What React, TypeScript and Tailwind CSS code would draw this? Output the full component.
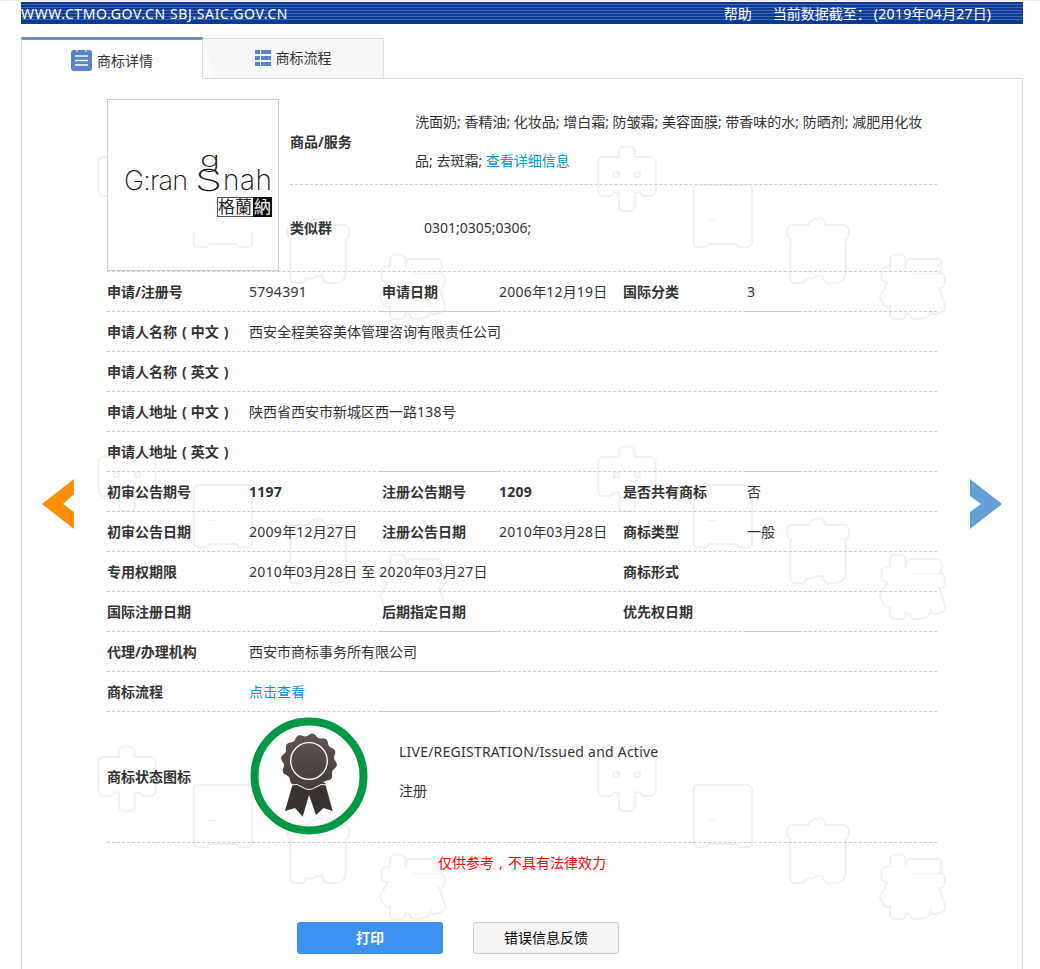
const FONT = "font-['Noto_Sans','Noto_Sans_CJK_SC',sans-serif]";

function T({ children }: { children: string }) {
  const parts = children.split(/([\x00-\x7F]+)/).filter(Boolean);
  return (
    <>
      {parts.map((p, i) =>
        /^[\x00-\x7F]+$/.test(p) ? (
          <span key={i} className="tracking-[0.28px]">{p}</span>
        ) : (
          <span key={i}>{p}</span>
        )
      )}
    </>
  );
}

function Seg({ x, w }: { x: number; w: number }) {
  return <span className="absolute bottom-[-1px] h-px bg-[#cccccc]" style={{ left: x, width: w }} />;
}

function Label({ children, className = "" }: { children?: React.ReactNode; className?: string }) {
  return <div className={"font-bold text-[#333] shrink-0 " + className}>{children}</div>;
}

function Row({ children, segs = "" }: { children: React.ReactNode; segs?: string }) {
  return (
    <div className="relative flex h-10 items-center border-b border-dashed border-[#cccccc] pt-px">
      {children}
      {segs.includes("a") && <Seg x={272} w={122} />}
      {segs.includes("b") && <Seg x={638} w={54} />}
    </div>
  );
}

function TripleRow({ l1, v1 = "", l2, v2 = "", l3, v3 = "", segs, bold }: { l1: string; v1?: string; l2: string; v2?: string; l3: string; v3?: string; segs?: string; bold?: boolean }) {
  return (
    <Row segs={segs}>
      <Label className="w-[142px]">{l1}</Label>
      <div className={"w-[133px] shrink-0 " + (bold ? "font-bold" : "")}><T>{v1}</T></div>
      <Label className="w-[117px]">{l2}</Label>
      <div className={"w-[124px] shrink-0 " + (bold ? "font-bold" : "")}><T>{v2}</T></div>
      <Label className="w-[124px]">{l3}</Label>
      <div><T>{v3}</T></div>
    </Row>
  );
}

function ParenLabel({ a, b }: { a: string; b: string }) {
  return (
    <>
      {a}
      <span className="ml-[5px] mr-[4px]">(</span>
      {b}
      <span className="ml-[5px] mr-[4px]">)</span>
    </>
  );
}

function WideRow({ label, children, segs }: { label: React.ReactNode; children?: React.ReactNode; segs?: string }) {
  return (
    <Row segs={segs}>
      <Label className="w-[142px]">{label}</Label>
      <div>{children}</div>
    </Row>
  );
}

function Watermark() {
  const sets = [
    [0, 0],
    [500, 0],
    [0, 300],
    [500, 300],
    [0, 600],
    [500, 600],
  ];
  const glyphs = [
    ["中", 127, 180],
    ["国", 223, 216],
    ["商", 318, 252],
    ["标", 413, 288],
  ] as const;
  return (
    <svg className="absolute left-0 top-0 pointer-events-none" width="1040" height="969">
      {sets.map(([sx, sy], i) =>
        glyphs.map(([g, cx, cy]) => (
          <g key={i + g} fontFamily="'Noto Sans CJK SC', sans-serif" fontSize="58" fontWeight="500" textAnchor="middle" strokeLinejoin="round" strokeLinecap="round">
            <text x={sx + cx} y={sy + cy + 21} fill="none" stroke="#f0f0f0" strokeWidth="12">{g}</text>
            <text x={sx + cx} y={sy + cy + 21} fill="#ffffff" stroke="#ffffff" strokeWidth="8">{g}</text>
          </g>
        ))
      )}
    </svg>
  );
}

function Logo() {
  return (
    <div className="relative h-[133px] w-full bg-white">
      <svg width="170" height="133" viewBox="0 0 170 133" className="block">
        <g fontFamily="Inter, 'Noto Sans', sans-serif" fontWeight="200" fill="#111111">
          <text x="16" y="90" fontSize="27" textLength="64" lengthAdjust="spacing">G:ran</text>
          <text x="87" y="91" fontSize="30" textLength="27" lengthAdjust="spacingAndGlyphs">S</text>
          <text x="92" y="67" fontSize="22" textLength="20" lengthAdjust="spacingAndGlyphs">g</text>
          <text x="115" y="90" fontSize="28" textLength="49" lengthAdjust="spacing">nah</text>
        </g>
        <rect x="109.5" y="97.5" width="54" height="19" fill="#ffffff" stroke="#555555" />
        <rect x="145" y="97" width="19" height="20" fill="#111111" />
        <text x="110" y="113" fontSize="17" fontFamily="'Noto Sans CJK TC', sans-serif" fill="#222222">格蘭</text>
        <text x="146" y="113" fontSize="17" fontFamily="'Noto Sans CJK TC', sans-serif" fill="#eeeeee">納</text>
      </svg>
    </div>
  );
}

function Medal() {
  const cx = 59;
  const cy = 44.5;
  const pts: string[] = [];
  for (let i = 0; i <= 240; i++) {
    const t = (i / 240) * Math.PI * 2;
    const r = 26.7 + 1.4 * Math.cos(12 * t - Math.PI / 2);
    pts.push((cx + r * Math.cos(t)).toFixed(2) + "," + (cy + r * Math.sin(t)).toFixed(2));
  }
  return (
    <svg width="118" height="118" viewBox="0 0 118 118" className="block">
      <defs>
        <linearGradient id="mg" x1="0" y1="0" x2="0" y2="1">
          <stop offset="0" stopColor="#5f5451" />
          <stop offset="1" stopColor="#453c38" />
        </linearGradient>
      </defs>
      <circle cx="59" cy="59" r="54.5" fill="none" stroke="#009845" strokeWidth="8" />
      <polygon points="43,66 35,94 45,91 52.7,99.7 59,78 66,98 73.5,91 82.7,94 75,66" fill="#3a322e" />
      <polygon points={pts.join(" ")} fill="url(#mg)" />
      <path d="M41.5 68 Q47 66 52 70 Q59 75 66 70 Q71 66 76.5 68" fill="none" stroke="#ffffff" strokeWidth="1" />
      <circle cx={cx} cy="44" r="18.3" fill="none" stroke="#ffffff" strokeWidth="1.3" />
    </svg>
  );
}

export default function App() {
  return (
    <div className={"relative h-[969px] overflow-hidden bg-white text-sm text-[#333] " + FONT}>
      <div className="h-[2px] border-t border-[#eeeeee] bg-white" />
      <Watermark />
      <header className="relative ml-[21px] mr-[17px] flex h-[22px] items-center justify-between bg-[#0b3a94] bg-[linear-gradient(to_top,#0b3a94_4px,transparent_4px),repeating-linear-gradient(to_bottom,#0b3a94_0px,#0b3a94_2px,#4469b2_2px,#4469b2_3px)] pt-px text-white">
        <span className="tracking-[0.62px]">WWW.CTMO.GOV.CN SBJ.SAIC.GOV.CN</span>
        <span className="flex">
          <span className="mr-[21px]">帮助</span>
          <span className="mr-[32px]">
            当前数据截至：<span className="ml-[3px] tracking-[0.3px]">(2019</span>年<span className="tracking-[0.3px]">04</span>月<span className="tracking-[0.3px]">27</span>日)
          </span>
        </span>
      </header>

      <nav className="relative ml-[21px] mt-[13px] flex h-[42px] items-end">
        <div className="z-10 flex h-[42px] w-[182px] items-center justify-center gap-[5px] border-x border-[#dddddd] border-t-[3px] border-t-[#6a8fd0] bg-white pt-[2px]">
          <svg width="21" height="21" viewBox="0 0 21 21">
            <rect width="21" height="21" rx="3" fill="#5b83cc" />
            <path d="M4 6h13M4 10.5h13M4 15h13" stroke="#ffffff" strokeWidth="1.6" />
            <path d="M6 0v2M15 0v2" stroke="#ffffff" strokeWidth="1" />
          </svg>
          <span>商标详情</span>
        </div>
        <div className="relative flex h-[41px] w-[181px] items-center justify-center gap-[5px] border-y border-r border-[#dddddd] bg-[#f7f7f7] pb-[2px]">
          <span className="absolute left-0 top-0 h-full w-[11px] bg-[#fcfcfc] [clip-path:polygon(0_0,100%_100%,0_100%)]" />
          <svg width="16" height="16" viewBox="0 0 16 16">
            <path d="M0 0h5v4H0zM6 0h10v4H6zM0 6h5v4H0zM6 6h10v4H6zM0 12h5v4H0zM6 12h10v4H6z" fill="#5b83cc" />
          </svg>
          <span>商标流程</span>
        </div>
      </nav>

      <main className="relative ml-[21px] mr-[17px] -mt-px h-[900px] border border-[#d9d9d9] px-[85px] pt-5">
        <div className="flex h-[173px] border-b border-dashed border-[#cccccc]">
          <div className="h-[172px] w-[172px] shrink-0 border border-[#cccccc]">
            <Logo />
          </div>
          <div className="ml-[11px] flex-1">
            <div className="flex h-[86px] border-b border-dashed border-[#cccccc]">
              <Label className="w-[125px] pt-[33px]">商品/服务</Label>
              <div className="flex-1 pt-[3px] leading-[39px]">
                洗面奶; 香精油; 化妆品; 增白霜; 防皱霜; 美容面膜; 带香味的水; 防晒剂; 减肥用化妆品; 去斑霜; <span className="text-[#0096d6]">查看详细信息</span>
              </div>
            </div>
            <div className="flex h-[86px] items-center">
              <Label className="w-[134px]">类似群</Label>
              <div>0301;0305;0306;</div>
            </div>
          </div>
        </div>

        <TripleRow l1="申请/注册号" v1="5794391" l2="申请日期" v2="2006年12月19日" l3="国际分类" v3="3" segs="ab" />
        <WideRow label={<ParenLabel a="申请人名称" b="中文" />}>西安全程美容美体管理咨询有限责任公司</WideRow>
        <WideRow label={<ParenLabel a="申请人名称" b="英文" />} />
        <WideRow label={<ParenLabel a="申请人地址" b="中文" />}><T>陕西省西安市新城区西一路138号</T></WideRow>
        <WideRow label={<ParenLabel a="申请人地址" b="英文" />} segs="ab" />
        <TripleRow l1="初审公告期号" v1="1197" l2="注册公告期号" v2="1209" l3="是否共有商标" v3="否" bold />
        <TripleRow l1="初审公告日期" v1="2009年12月27日" l2="注册公告日期" v2="2010年03月28日" l3="商标类型" v3="一般" />
        <Row>
          <Label className="w-[142px]">专用权期限</Label>
          <div className="w-[374px] shrink-0"><T>2010年03月28日 至 2020年03月27日</T></div>
          <Label>商标形式</Label>
        </Row>
        <TripleRow l1="国际注册日期" l2="后期指定日期" l3="优先权日期" segs="ab" />
        <WideRow label="代理/办理机构" segs="a">西安市商标事务所有限公司</WideRow>
        <WideRow label="商标流程" segs="a"><span className="text-[#0096d6]">点击查看</span></WideRow>

        <div className="flex h-[131px] items-center border-b border-dashed border-[#cccccc]">
          <Label className="w-[142px]">商标状态图标</Label>
          <div className="w-[150px] shrink-0 pb-[3px] pl-px"><Medal /></div>
          <div className="flex flex-col gap-[19px] pb-[12px]">
            <div className="tracking-[0.23px]">LIVE/REGISTRATION/Issued and Active</div>
            <div>注册</div>
          </div>
        </div>

        <p className="mt-[10px] text-center text-[#ff0000]">
          仅供参考<span className="inline-block w-[14px] text-center">,</span>不具有法律效力
        </p>

        <div className="ml-[190px] mt-[49px] flex gap-[30px]">
          <button className="h-8 w-[146px] rounded-[3px] bg-[#3f92f2] font-bold text-white">打印</button>
          <button className="h-8 w-[146px] rounded-[3px] border border-[#cccccc] bg-[#f5f5f5] text-black">错误信息反馈</button>
        </div>
      </main>

      <svg className="absolute left-[42px] top-[479px]" width="32" height="50" viewBox="0 0 32 50">
        <polygon points="32,0 0,25 32,50 32,33 21,25 32,15" fill="#fe8f00" />
      </svg>
      <svg className="absolute left-[970px] top-[479px]" width="32" height="50" viewBox="0 0 32 50">
        <polygon points="0,0 32,25 0,50 0,33 11,25 0,17" fill="#659fd8" />
      </svg>
    </div>
  );
}
